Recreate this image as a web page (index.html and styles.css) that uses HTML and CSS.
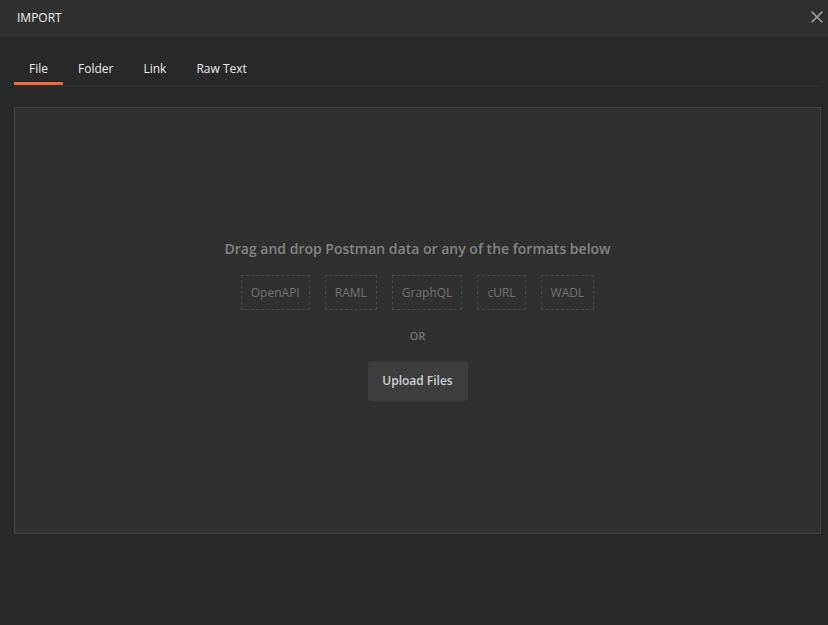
FILE: index.html
```html
<!DOCTYPE html>
<html>
<head>
<meta charset="utf-8">
<link rel="stylesheet" href="styles.css">
</head>
<body>
<div class="modal">
  <div class="header">
    <span class="title">IMPORT</span>
    <svg class="close" width="12" height="12" viewBox="0 0 12 12"><path d="M0.6 0.6L11.4 11.4M11.4 0.6L0.6 11.4" stroke="#9a9a9a" stroke-width="1.6" fill="none"/></svg>
  </div>
  <div class="content">
    <div class="tabs">
      <div class="tab active">File</div>
      <div class="tab">Folder</div>
      <div class="tab">Link</div>
      <div class="tab">Raw Text</div>
    </div>
    <div class="dropzone">
      <div class="drag-text">Drag and drop Postman data or any of the formats below</div>
      <div class="formats">
        <span class="fmt">OpenAPI</span>
        <span class="fmt">RAML</span>
        <span class="fmt">GraphQL</span>
        <span class="fmt">cURL</span>
        <span class="fmt">WADL</span>
      </div>
      <div class="or">OR</div>
      <button class="upload">Upload Files</button>
    </div>
  </div>
</div>
</body>
</html>
```
FILE: styles.css
```css
html, body {
  margin: 0;
  padding: 0;
  background: #282828;
  font-family: "Open Sans", "Liberation Sans", sans-serif;
}
.modal {
  width: 828px;
  height: 625px;
  background: #282828;
}
.header {
  height: 37px;
  background: #303030;
  display: flex;
  align-items: center;
  justify-content: space-between;
  padding: 0 5px 0 17px;
  box-sizing: border-box;
}
.title {
  color: #f0f0f0;
  font-size: 12px;
  font-weight: 400;
  margin-top: -3px;
}
.close {
  margin-top: -3px;
}
.content {
  padding: 0 7px 0 14px;
}
.tabs {
  display: flex;
  margin-top: 21px;
  border-bottom: 2px solid #2e2e2e;
  height: 27px;
}
.tab {
  padding: 0 15px;
  color: #ececec;
  font-size: 12px;
  font-weight: 400;
  line-height: 21px;
  height: 27px;
  box-sizing: border-box;
  border-bottom: 3px solid transparent;
}
.tab.active {
  border-bottom-color: #f26b3a;
}
.dropzone {
  margin-top: 20px;
  height: 427px;
  box-sizing: border-box;
  border: 1px solid #454545;
  background: #303030;
  display: flex;
  flex-direction: column;
  align-items: center;
  justify-content: center;
  padding-bottom: 2px;
}
.drag-text {
  color: #858585;
  font-size: 14px;
  font-weight: 600;
  line-height: 20px;
}
.formats {
  display: flex;
  gap: 15px;
  margin-top: 16px;
}
.fmt {
  height: 35px;
  line-height: 33px;
  box-sizing: border-box;
  padding: 0 9px;
  border: 1px dashed #474747;
  color: #757575;
  font-size: 12px;
  font-weight: 400;
}
.or {
  margin-top: 18px;
  color: #767676;
  font-size: 11px;
  font-weight: 600;
  line-height: 16px;
}
.upload {
  margin-top: 17px;
  width: 100px;
  height: 40px;
  border: none;
  border-radius: 3px;
  background: #3d3d3d;
  color: #d0d0d0;
  font-family: "Open Sans", "Liberation Sans", sans-serif;
  font-size: 12px;
  font-weight: 600;
  padding: 0;
}
```
